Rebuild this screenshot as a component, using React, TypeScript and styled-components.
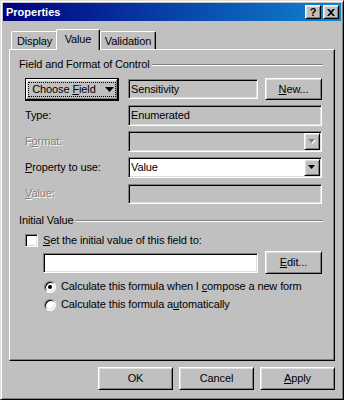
import React from 'react';
import styled, { createGlobalStyle, css } from 'styled-components';

const GlobalStyle = createGlobalStyle`
  html, body { margin: 0; padding: 0; background: #c0c0c0; }
  body {
    font-family: "Liberation Sans", Arial, sans-serif;
    font-size: 11px;
    line-height: 13px;
    letter-spacing: -0.12px;
    color: #000;
  }
  *, *::before, *::after { box-sizing: border-box; }
`;

const raised = css`
  border: 1px solid;
  border-color: #fff #000 #000 #fff;
  box-shadow: inset 1px 1px #dfdfdf, inset -1px -1px #808080;
`;

const sunken = css`
  border: 1px solid;
  border-color: #808080 #fff #fff #808080;
  box-shadow: inset 1px 1px #000, inset -1px -1px #dfdfdf;
`;

const Window = styled.div`
  width: 344px;
  height: 400px;
  display: flex;
  flex-direction: column;
  padding: 2px;
  background: #c0c0c0;
  border: 1px solid;
  border-color: #dfdfdf #000 #000 #dfdfdf;
  box-shadow: inset 1px 1px #fff, inset -1px -1px #808080;
`;

const TitleBar = styled.div`
  height: 18px;
  flex: none;
  display: flex;
  align-items: center;
  justify-content: space-between;
  padding: 0 2px 0 3px;
  background: linear-gradient(to right, #000080, #1084d0);
`;

const Title = styled.span`
  color: #fff;
  font-weight: bold;
  font-size: 11px;
  line-height: 13px;
  letter-spacing: 0;
`;

const TitleButtons = styled.div`
  display: flex;
  gap: 2px;
`;

const TitleButton = styled.div`
  width: 16px;
  height: 14px;
  display: flex;
  align-items: center;
  justify-content: center;
  background: #c0c0c0;
  font-weight: bold;
  font-size: 11px;
  line-height: 11px;
  ${raised}
`;

const TabStrip = styled.div`
  flex: none;
  margin-top: 8px;
  height: 20px;
  display: flex;
  align-items: flex-end;
  padding-left: 8px;
`;

const Tab = styled.div<{ $w: number; $active?: boolean }>`
  position: relative;
  width: ${(p) => p.$w}px;
  height: ${(p) => (p.$active ? 21 : 18)}px;
  margin: 0 0 ${(p) => (p.$active ? -1 : 0)}px ${(p) => (p.$active ? -2 : 0)}px;
  z-index: ${(p) => (p.$active ? 2 : 1)};
  display: flex;
  justify-content: center;
  padding-top: 3px;
  white-space: nowrap;
  background: #c0c0c0;
  border-top: 1px solid #fff;
  border-left: 1px solid #fff;
  border-right: 1px solid #000;
  border-radius: 2px 2px 0 0;
  box-shadow: inset -1px 0 #808080;
`;

const Panel = styled.div`
  flex: none;
  position: relative;
  z-index: 1;
  margin: 0 6px;
  height: 312px;
  padding: 8px 11px 0 9px;
  border: 1px solid;
  border-color: #fff #000 #000 #fff;
  box-shadow: inset -1px -1px #808080;
`;

const GroupHeader = styled.div<{ $top?: number }>`
  display: flex;
  align-items: center;
  gap: 2px;
  margin-top: ${(p) => p.$top ?? 0}px;
  height: 13px;
  white-space: nowrap;
`;

const GroupLine = styled.div`
  flex: 1;
  height: 2px;
  border-top: 1px solid #808080;
  border-bottom: 1px solid #fff;
  margin-top: 1px;
`;

const FieldGrid = styled.div`
  display: grid;
  grid-template-columns: 103px 130px 64px;
  grid-template-rows: 22px repeat(4, 21px);
  row-gap: 5px;
  align-items: center;
  margin: 7px 0 0 6px;
`;

const FieldLabel = styled.span<{ $disabled?: boolean }>`
  grid-column: 1;
  white-space: nowrap;
  color: ${(p) => (p.$disabled ? '#808080' : '#000')};
  text-shadow: ${(p) => (p.$disabled ? '1px 1px #fff' : 'none')};
`;

const TextField = styled.div<{ $white?: boolean; $span?: boolean; $h?: number }>`
  grid-column: ${(p) => (p.$span ? '2 / 4' : '2')};
  height: ${(p) => p.$h ?? 20}px;
  display: flex;
  align-items: center;
  padding: 0 3px 0 2px;
  background: ${(p) => (p.$white ? '#fff' : '#c0c0c0')};
  white-space: nowrap;
  overflow: hidden;
  ${sunken}
`;

const ComboBox = styled.div<{ $white?: boolean }>`
  grid-column: 2 / 4;
  height: 21px;
  display: flex;
  align-items: stretch;
  padding: 1px;
  background: ${(p) => (p.$white ? '#fff' : '#c0c0c0')};
  ${sunken}
`;

const ComboValue = styled.div`
  flex: 1;
  display: flex;
  align-items: center;
  padding-left: 1px;
`;

const ComboButton = styled.div`
  width: 16px;
  display: flex;
  align-items: center;
  justify-content: center;
  background: #c0c0c0;
  ${raised}
`;

const PushButton = styled.button<{ $w: number; $h?: number; $default?: boolean }>`
  width: ${(p) => p.$w}px;
  height: ${(p) => p.$h ?? 23}px;
  margin: 0;
  padding: 0;
  font: inherit;
  letter-spacing: inherit;
  color: #000;
  background: #c0c0c0;
  display: flex;
  align-items: center;
  justify-content: center;
  white-space: nowrap;
  cursor: default;
  ${(p) =>
    p.$default
      ? css`
          padding: 3px;
          border: 1px solid #000;
          box-shadow: inset -1px -1px #000, inset 1px 1px #fff, inset -2px -2px #808080,
            inset 2px 2px #dfdfdf;
        `
      : raised}
`;

const FocusRing = styled.span`
  flex: 1;
  align-self: stretch;
  display: flex;
  align-items: center;
  gap: 9px;
  padding-left: 3px;
  border: 1px dotted #000;
  white-space: nowrap;
`;

const Key = styled.span`
  text-decoration: underline;
  text-underline-offset: 1px;
`;

const CheckRow = styled.div`
  display: flex;
  align-items: center;
  gap: 5px;
  height: 13px;
  margin: 7px 0 0 6px;
  white-space: nowrap;
`;

const CheckBox = styled.div`
  width: 13px;
  height: 13px;
  flex: none;
  background: #fff;
  ${sunken}
`;

const InputRow = styled.div`
  display: flex;
  align-items: center;
  gap: 7px;
  height: 23px;
  margin: 4px 0 0 24px;
`;

const WideInput = styled.div`
  width: 215px;
  height: 20px;
  background: #fff;
  ${sunken}
`;

const RadioRow = styled.div<{ $top: number }>`
  display: flex;
  align-items: center;
  gap: 5px;
  height: 13px;
  margin: ${(p) => p.$top}px 0 0 25px;
  white-space: nowrap;
`;

const Radio = styled.div`
  width: 12px;
  height: 12px;
  flex: none;
  border-radius: 50%;
  display: flex;
  align-items: center;
  justify-content: center;
  background: #fff;
  border: 1px solid;
  border-color: #808080 #fff #fff #808080;
  box-shadow: inset 1px 1px #000, inset -1px -1px #dfdfdf;
`;

const RadioDot = styled.div`
  width: 4px;
  height: 4px;
  border-radius: 50%;
  background: #000;
`;

const Footer = styled.div`
  flex: none;
  display: flex;
  justify-content: flex-end;
  gap: 6px;
  margin: 6px 6px 0 0;
`;

const DownArrow = ({ w = 7, h = 4, disabled = false }: { w?: number; h?: number; disabled?: boolean }) => (
  <svg width={w + 1} height={h + 1} viewBox={`0 0 ${w + 1} ${h + 1}`} style={{ display: 'block', flex: 'none' }}>
    {disabled && <polygon points={`1,1 ${w + 1},1 ${(w + 2) / 2},${h + 1}`} fill="#fff" />}
    <polygon points={`0,0 ${w},0 ${w / 2},${h}`} fill={disabled ? '#808080' : '#000'} />
  </svg>
);

const CloseGlyph = () => (
  <svg width="8" height="7" viewBox="0 0 8 7" style={{ display: 'block' }}>
    <path d="M0 0h2l2 2 2-2h2L5 3.5 8 7H6L4 5 2 7H0l3-3.5z" fill="#000" />
  </svg>
);

export default function App() {
  return (
    <>
      <GlobalStyle />
      <Window>
        <TitleBar>
          <Title>Properties</Title>
          <TitleButtons>
            <TitleButton>?</TitleButton>
            <TitleButton>
              <CloseGlyph />
            </TitleButton>
          </TitleButtons>
        </TitleBar>

        <TabStrip>
          <Tab $w={47}>Display</Tab>
          <Tab $w={44} $active>
            Value
          </Tab>
          <Tab $w={56}>Validation</Tab>
        </TabStrip>

        <Panel>
          <GroupHeader>
            <span>Field and Format of Control</span>
            <GroupLine />
          </GroupHeader>

          <FieldGrid>
            <PushButton $w={94} $default style={{ alignSelf: 'start' }}>
              <FocusRing>
                <span>
                  Choose <Key>F</Key>ield
                </span>
                <DownArrow w={9} h={5} />
              </FocusRing>
            </PushButton>
            <TextField>Sensitivity</TextField>
            <PushButton $w={57} $h={22} style={{ justifySelf: 'end' }}>
              <span>
                <Key>N</Key>ew...
              </span>
            </PushButton>

            <FieldLabel>Type:</FieldLabel>
            <TextField $span $h={21}>
              Enumerated
            </TextField>

            <FieldLabel $disabled>
              F<Key>o</Key>rmat:
            </FieldLabel>
            <ComboBox>
              <ComboValue />
              <ComboButton>
                <DownArrow disabled />
              </ComboButton>
            </ComboBox>

            <FieldLabel>
              <Key>P</Key>roperty to use:
            </FieldLabel>
            <ComboBox $white>
              <ComboValue>Value</ComboValue>
              <ComboButton>
                <DownArrow />
              </ComboButton>
            </ComboBox>

            <FieldLabel $disabled>
              <Key>V</Key>alue:
            </FieldLabel>
            <TextField $span />
          </FieldGrid>

          <GroupHeader $top={10}>
            <span>Initial Value</span>
            <GroupLine />
          </GroupHeader>

          <CheckRow>
            <CheckBox />
            <span>
              <Key>S</Key>et the initial value of this field to:
            </span>
          </CheckRow>

          <InputRow>
            <WideInput />
            <PushButton $w={57} $h={23}>
              <span>
                <Key>E</Key>dit...
              </span>
            </PushButton>
          </InputRow>

          <RadioRow $top={6}>
            <Radio>
              <RadioDot />
            </Radio>
            <span>
              Calculate this formula when I <Key>c</Key>ompose a new form
            </span>
          </RadioRow>
          <RadioRow $top={5}>
            <Radio />
            <span>
              Calculate this formula a<Key>u</Key>tomatically
            </span>
          </RadioRow>
        </Panel>

        <Footer>
          <PushButton $w={75}>OK</PushButton>
          <PushButton $w={75}>Cancel</PushButton>
          <PushButton $w={75}>
            <span>
              <Key>A</Key>pply
            </span>
          </PushButton>
        </Footer>
      </Window>
    </>
  );
}
